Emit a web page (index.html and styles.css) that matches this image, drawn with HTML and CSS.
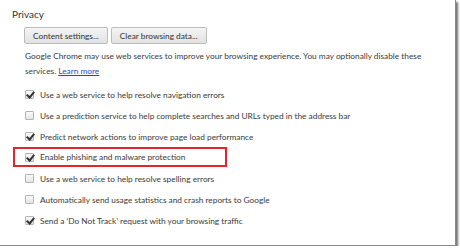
FILE: index.html
```html
<!DOCTYPE html>
<html lang="en">
<head>
  <meta charset="UTF-8" />
  <title>Privacy</title>
  <link rel="stylesheet" href="styles.css">
</head>
<body>
  <div class="page">
    <div class="section-title">Privacy</div>
    <div class="section-body">
      <div class="button-group">
        <button type="button">Content settings...</button>
        <button type="button">Clear browsing data...</button>
      </div>
      <p class="note"><span>Google Chrome may use web services to improve your browsing experience. You may optionally disable these</span> <span>services.</span> <a href="#">Learn more</a></p>

      <div class="options">
        <label class="row"><span class="box checked"></span>Use a web service to help resolve navigation errors</label>
        <label class="row"><span class="box"></span>Use a prediction service to help complete searches and URLs typed in the address bar</label>
        <label class="row"><span class="box checked"></span>Predict network actions to improve page load performance</label>
        <label class="row highlight"><span class="box checked"></span>Enable phishing and malware protection</label>
        <label class="row"><span class="box"></span>Use a web service to help resolve spelling errors</label>
        <label class="row"><span class="box"></span>Automatically send usage statistics and crash reports to Google</label>
        <label class="row"><span class="box checked"></span>Send a ‘Do Not Track’ request with your browsing traffic</label>
      </div>
    </div>
  </div>
</body>
</html>
```

FILE: styles.css
```css
body {
  margin: 0;
  background: #fff;
  font-family: 'Lato', sans-serif;
  font-size: 8.3px;
  color: #3a3a3a;
}

.page {
  width: 455px;
  height: 245px;
  background: #fff;
  border-right: 1px solid #8a8a8a;
  border-bottom: 1px solid #8a8a8a;
  box-shadow: 2px 2px 2px rgba(0, 0, 0, 0.55);
  overflow: hidden;
}

.section-title {
  padding: 7px 0 0 12px;
  line-height: 14px;
  font-size: 10px;
  color: #333;
}

.section-body {
  padding-left: 25px;
}

.button-group {
  display: flex;
  gap: 3px;
  margin-top: 6px;
  margin-left: -1px;
}

button {
  height: 17px;
  padding: 0 8px;
  font-family: 'Lato', sans-serif;
  font-size: 8.3px;
  color: #333;
  background: linear-gradient(#f4f4f4, #e2e2e2);
  border: 1px solid #bcbcbc;
  border-radius: 2px;
}

.note {
  margin: 5px 0 0 0;
  width: 412px;
  line-height: 15px;
}

.note a {
  color: #1a4fc4;
}

.options {
  display: flex;
  flex-direction: column;
  margin-top: 5px;
}

.row {
  display: flex;
  align-items: center;
  height: 21px;
  gap: 6px;
}

.row.highlight {
  height: 20px;
  margin: 0 0 1px -12px;
  width: 214px;
  padding-left: 10px;
  border: 2px solid #e3262e;
  box-sizing: border-box;
}

.box {
  width: 7px;
  height: 7px;
  border: 1px solid #b5b5b5;
  border-radius: 1px;
  background: linear-gradient(#fafafa, #e4e4e4);
  position: relative;
}

.box.checked::after {
  content: "";
  position: absolute;
  left: 2px;
  top: -1px;
  width: 3px;
  height: 6px;
  border-right: 2px solid #333;
  border-bottom: 2px solid #333;
  transform: rotate(40deg);
}
```
